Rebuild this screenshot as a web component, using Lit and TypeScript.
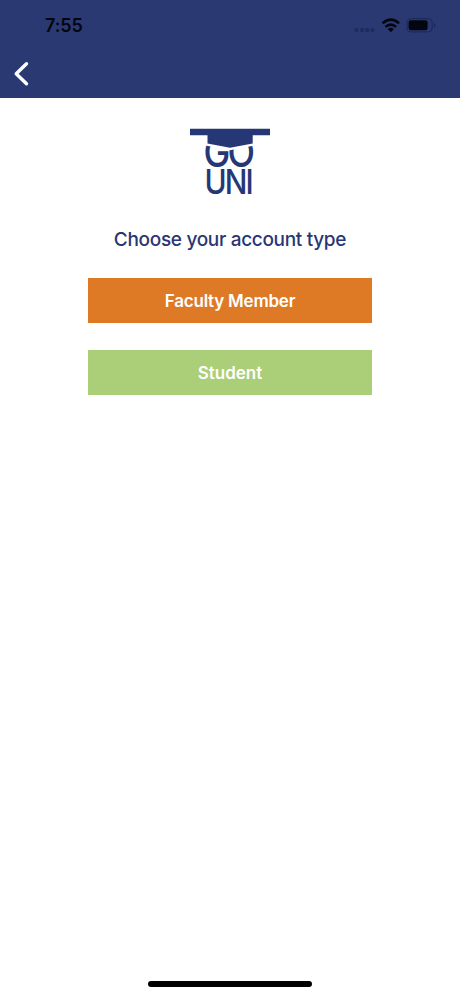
import { LitElement, html, css } from "lit";
import { customElement } from "lit/decorators.js";

@customElement("status-bar")
class StatusBar extends LitElement {
  static styles = css`
    :host { display: flex; justify-content: space-between; height: 50px; color: #03060f; }
    .time { margin: 15px 0 0 45px; font: 600 18px/22px Inter, sans-serif; letter-spacing: -.1px; }
    svg { display: block; margin-right: 22px; }
  `;
  render() {
    return html`
      <span class="time">7:55</span>
      <svg width="84" height="50" viewBox="354 0 84 50">
        <g fill="#1f2c60">
          <rect x="354.5" y="28" width="4" height="4" rx="1.5" />
          <rect x="360" y="28" width="4" height="4" rx="1.5" />
          <rect x="365.200" y="28" width="4" height="4" rx="1.5" />
          <rect x="370.500" y="28" width="4" height="4" rx="1.5" />
        </g>
        <g fill="none" stroke="#03060f" stroke-width="2.6">
          <path d="M382.600 23.400Q390.800 15.900 399 23.400" />
          <path d="M385.500 26.900Q390.800 22.200 396.100 26.900" />
        </g>
        <path d="M387.700 29.100Q390.800 26.600 393.900 29.100L390.800 32.300Z" fill="#03060f" />
        <rect x="407" y="18.700" width="25.200" height="13.200" rx="3.800" fill="none" stroke="#1b2757" />
        <rect x="408.600" y="20.300" width="19" height="10" rx="2.300" fill="#03060f" />
        <path d="M434 23v4.800q1.600-.8 1.600-2.400t-1.600-2.400z" fill="#1b2757" />
      </svg>
    `;
  }
}

@customElement("gouni-logo")
class GouniLogo extends LitElement {
  static styles = css`
    :host, svg { display: block; }
    svg { overflow: visible; }
    text { font-family: Inter, sans-serif; font-weight: 500; fill: #263775; }
    .go { font-size: 41px; }
    .uni { font-size: 34px; }
  `;
  render() {
    return html`
      <svg width="82" height="70" viewBox="189 127 82 70">
        <text class="go" transform="translate(203.400 167.300) scale(.875 1)" x="0 27.600">GO</text>
        <text class="uni" transform="translate(204.400 194.300) scale(.88 1)" x="0 23 46.600">UNI</text>
        <path d="M203 134H257V145L230 150.300L203 145Z" fill="#fff" />
        <path d="M190 128.700H270V135.200H252.700V143.500L230 147.800L207.500 143.500V135.200H190Z" fill="#263775" />
      </svg>
    `;
  }
}

@customElement("app-root")
class AppRoot extends LitElement {
  static styles = css`
    :host {
      display: flex; flex-direction: column; height: 996px;
      background: #fff; font-family: Inter, sans-serif;
    }
    header { height: 98px; background: #2a3972; }
    .back {
      display: block; margin: 10px 0 0 12px; padding: 0; border: 0; background: none;
    }
    .back svg { display: block; }
    main { flex: 1; display: flex; flex-direction: column; align-items: center; }
    gouni-logo { margin-top: 29px; }
    h1 {
      margin: 30px 0 26.400px; color: #293674; white-space: nowrap;
      font-size: 19px; line-height: 25px; font-weight: 500; letter-spacing: -.32px;
    }
    .choice {
      width: 284px; height: 44.500px; padding: 0; border: 0; color: #fff;
      font: 600 17px/44px Inter, sans-serif;
    }
    .faculty { background: #de7926; margin-bottom: 27.500px; letter-spacing: -.22px; }
    .student { background: #abce79; }
    .home { width: 164px; height: 6px; border-radius: 3px; background: #000; margin: 0 auto 9px; }
  `;
  render() {
    return html`
      <header>
        <status-bar></status-bar>
        <button class="back" aria-label="Back">
          <svg width="20" height="28" viewBox="12 60 20 28">
            <path d="M26.500 63.800L16.200 73.700L26.500 83.800" fill="none" stroke="#fff" stroke-width="3.400" stroke-linecap="round" stroke-linejoin="round" />
          </svg>
        </button>
      </header>
      <main>
        <gouni-logo></gouni-logo>
        <h1>Choose your account type</h1>
        <button class="choice faculty">Faculty Member</button>
        <button class="choice student">Student</button>
      </main>
      <div class="home"></div>
    `;
  }
}
